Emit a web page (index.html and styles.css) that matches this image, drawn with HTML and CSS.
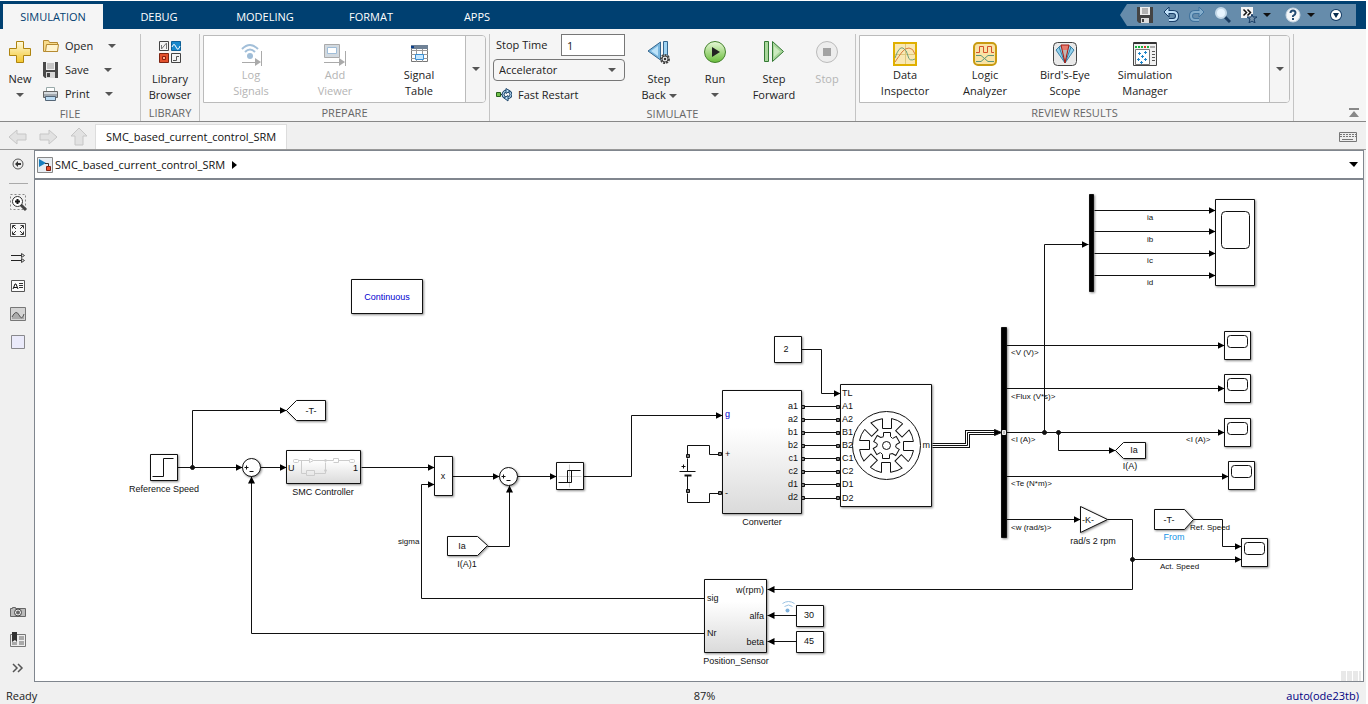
FILE: index.html
```
<!DOCTYPE html>
<html lang="en">

<head>
    <meta charset="UTF-8">
    <meta name="viewport" content="width=device-width, initial-scale=1.0">
    <title>SMC_based_current_control_SRM</title>
    <link rel="stylesheet" href="styles.css">
</head>

<body>
    <!-- tab strip -->
    <header class="tab-bar">
        <nav class="tabs">
            <button class="tab active">SIMULATION</button>
            <button class="tab">DEBUG</button>
            <button class="tab">MODELING</button>
            <button class="tab">FORMAT</button>
            <button class="tab">APPS</button>
        </nav>
        <div class="quick-access">
            <button aria-label="Save"><svg width="16" height="16"><path d="M0 0h16v16H2l-2-2z" fill="#444"/><path d="M3 0h10v8H3z" fill="#eee"/><path d="M5 2h6M5 4h6M5 6h6" stroke="#777"/><path d="M4 11h8v5H4z" fill="#ddd"/><path d="M5 12h2v3H5z" fill="#444"/></svg></button>
            <button aria-label="Undo"><svg width="16" height="16"><path d="M4 5h6q4 0 4 4t-4 4H6" fill="none" stroke="#173c66" stroke-width="4"/><path d="M6 0L1 5l5 5z" fill="#bfe0f8" stroke="#173c66"/><path d="M4 5h6q4 0 4 4t-4 4H6" fill="none" stroke="#bfe0f8" stroke-width="2"/></svg></button>
            <button aria-label="Redo"><svg width="16" height="16"><path d="M12 5H6q-4 0-4 4t4 4h4" fill="none" stroke="#3f729d" stroke-width="4"/><path d="M10 0l5 5-5 5z" fill="#84adcb" stroke="#3f729d"/><path d="M12 5H6q-4 0-4 4t4 4h4" fill="none" stroke="#84adcb" stroke-width="2"/></svg></button>
            <button aria-label="Find"><svg width="16" height="16"><path d="M9 9l6 6" stroke="#1c3e63" stroke-width="3"/><circle cx="6" cy="6" r="5" fill="#e8f5ff" stroke="#c5d9e8" stroke-width="2"/></svg></button>
            <button class="with-arrow" aria-label="Shortcuts"><svg width="16" height="16"><path d="M0 0h12v11H0z" fill="#f5f5f5"/><path d="M2.5 2.500l3 3-3 3M6.500 2.500l3 3-3 3" fill="none" stroke="#111" stroke-width="1.500"/><path d="M11 7l1 3h4l-3 2 1 4-3-2-3 2 1-4-3-2h4z" fill="#7793ab" stroke="#173c66"/></svg><span class="arrow dark"></span></button>
            <button class="with-arrow" aria-label="Help"><svg width="16" height="16"><circle cx="8" cy="8" r="7" fill="#f4f6f8" stroke="#c7d6e2"/><path d="M5.500 6q0-2.500 2.500-2.500t2.500 2.500q0 1.500-2.500 3v1M8 11v2" fill="none" stroke="#234b73" stroke-width="2"/></svg><span class="arrow dark"></span></button>
            <button aria-label="More"><svg width="14" height="14"><circle cx="7" cy="7" r="6" fill="#163d66"/><circle cx="7" cy="7" r="5" fill="#fff"/><path d="M4 5h6l-3 5z" fill="#0a2d50"/></svg></button>
        </div>
    </header>

    <!-- toolstrip -->
    <div class="toolstrip">
        <section class="group">
            <div class="group-body">
                <button class="big-button new-button">
                    <svg width="24" height="24"><defs><linearGradient id="gold" x2="0" y2="1"><stop offset="0" stop-color="#fffbe0"/><stop offset="1" stop-color="#f3c62c"/></linearGradient></defs><path d="M8.500 1.500h7v7h7v7h-7v7h-7v-7h-7v-7h7z" fill="url(#gold)" stroke="#ae8410"/></svg>
                    <span>New</span><span class="arrow"></span>
                </button>
                <div class="file-list">
                    <button><svg width="18" height="16"><path d="M1.500 13.500v-11h5l1 2h8v9z" fill="#f8dc8c" stroke="#b58a31"/><path d="M3.500 13.500l1-7h12l-1 7z" fill="#fff4cf" stroke="#b58a31"/></svg>Open<span class="arrow"></span></button>
                    <button><svg width="18" height="16"><path d="M1 0h15v16H3l-2-2z" fill="#494949"/><path d="M4 0h9v8H4z" fill="#f2f2f2"/><path d="M5 2h7M5 4h7M5 6h7" stroke="#999"/><path d="M4 10h9v6H4z" fill="#d7d7d7"/><path d="M5 11h3v4H5z" fill="#444"/></svg>Save<span class="arrow"></span></button>
                    <button><svg width="18" height="16"><path d="M4.500 1.500h8v5h-8z" fill="#fff" stroke="#9aa"/><path d="M1.500 5.500h14v6h-14z" fill="#a3a9af" stroke="#666"/><path d="M2 6h13v2H2z" fill="#d5dade"/><path d="M3.500 10.500h10v4h-10z" fill="#bcdcf4" stroke="#567"/></svg>Print<span class="arrow"></span></button>
                </div>
            </div>
            <div class="group-name">FILE</div>
        </section>

        <section class="group">
            <div class="group-body">
                <button class="big-button library-button">
                    <svg width="24" height="24"><g stroke="#444"><path d="M1.500 1.500h9v9h-9z" fill="#f3f3f3"/><path d="M13.500 1.500h9v9h-9z" fill="#1688cc" stroke="#0d5f96"/><path d="M1.500 13.500h9v9h-9z" fill="#e2512d" stroke="#7d2412"/><path d="M13.500 13.500h9v9h-9z" fill="#f3f3f3"/></g><path d="M3.500 9V5M3.500 9l5-6M8.500 3v6" stroke="#777" fill="none"/><path d="M14 7q2-5 4 0t4-1" stroke="#fff" fill="none"/><path d="M4.500 16.500h3v3h-3z" fill="#ffb08f" stroke="#8d1c0d"/><path d="M15 20.500h3.500v-4H21" stroke="#555" fill="none"/></svg>
                    <span>Library<br>Browser</span>
                </button>
            </div>
            <div class="group-name">LIBRARY</div>
        </section>

        <section class="group">
            <div class="group-body">
                <div class="gallery prepare">
                    <button disabled><svg width="24" height="24"><path d="M3 7q8-8 16 0M6 10q5-5 10 0" fill="none" stroke="#a2bfd9" stroke-width="2"/><circle cx="11" cy="14" r="3" fill="#a0bdd7"/><path d="M3 20.500h14" stroke="#aaa"/><path d="M16 16l6 4-6 4zM22 9h1v15h-1z" fill="#aaa"/></svg>Log<br>Signals</button>
                    <button disabled><svg width="24" height="24"><path d="M1.500 2.500h15v13h-15z" fill="#d2d9df" stroke="#aaa"/><path d="M4.500 5.500h9v6h-9z" fill="#fff" stroke="#9fbdd8"/><path d="M1 20.500h15" stroke="#aaa"/><path d="M16 16l6 4-6 4zM22 9h1v15h-1z" fill="#aaa"/></svg>Add<br>Viewer</button>
                    <button><svg width="24" height="24"><path d="M4.500 3.500h16v16h-16z" fill="#fff" stroke="#777"/><path d="M4 3h17v4H4z" fill="#6f8296"/><path d="M4 4h3v2H4z" fill="#0d3f8a"/><path d="M4 8.500h17M4 12.500h17M4 16.500h17M9.500 7v13M15.500 7v13" stroke="#999"/><path d="M8.500 12.500h8v5h-8z" fill="#c6e8ff" stroke="#3b8fd4"/></svg>Signal<br>Table</button>
                    <button class="gallery-more" aria-label="More prepare tools"><span class="arrow"></span></button>
                </div>
            </div>
            <div class="group-name">PREPARE</div>
        </section>

        <section class="group">
            <div class="group-body">
                <div class="sim-options">
                    <div class="stop-time"><label for="stop-time">Stop Time</label><input type="text" id="stop-time" value="1"></div>
                    <div class="mode"><select aria-label="Simulation mode"><option>Accelerator</option><option>Normal</option></select><span class="arrow"></span></div>
                    <button class="fast-restart"><svg width="16" height="14"><path d="M.500 4.500h4v4h-4z" fill="#6fc04a" stroke="#28601c"/><path d="M5 6.500h2" stroke="#222"/><ellipse cx="11" cy="6.500" rx="4" ry="3.500" fill="none" stroke="#234a6e" stroke-width="3"/><ellipse cx="11" cy="6.500" rx="4" ry="3.500" fill="none" stroke="#b9dcf5"/><path d="M10 .500l4 2.500-4 2.500zM12 7.500L8 10l4 3z" fill="#b9dcf5" stroke="#234a6e"/></svg>Fast Restart</button>
                </div>
                <button class="big-button step-back">
                    <svg width="24" height="24"><path d="M13.500 2v18L1 11z" fill="#79b7df" stroke="#35668e"/><path d="M11 6v10l-7-5z" fill="#bde3f9"/><path d="M16.500 1.500h4v18h-4z" fill="#9fd3f2" stroke="#35668e"/><circle cx="18" cy="19" r="4" fill="#eee" stroke="#444" stroke-width="2" stroke-dasharray="2 1"/><circle cx="18" cy="19" r="3" fill="#ddd" stroke="#444"/><circle cx="18" cy="19" r="1"/></svg>
                    <span>Step<br>Back <i class="arrow"></i></span>
                </button>
                <button class="big-button run">
                    <svg width="24" height="24"><defs><linearGradient id="green" x2="0" y2="1"><stop offset="0" stop-color="#e8f8d8"/><stop offset="1" stop-color="#69bd3b"/></linearGradient></defs><circle cx="12" cy="12" r="10.500" fill="url(#green)" stroke="#45822e"/><path d="M9 7l8 5-8 5z" fill="#222"/></svg>
                    <span>Run</span><span class="arrow"></span>
                </button>
                <button class="big-button step-forward">
                    <svg width="24" height="24"><path d="M2.500 1.500h4v20h-4zM10.500 1.500l11 10-11 10z" fill="#a9d69b" stroke="#347a34"/><path d="M12 6v11l6-5.500z" fill="#cdebc0"/></svg>
                    <span>Step<br>Forward</span>
                </button>
                <button class="big-button stop" disabled>
                    <svg width="24" height="24"><circle cx="12" cy="12" r="10.500" fill="#ededed" stroke="#bbb"/><path d="M8 8h8v8H8z" fill="#a2a2a2"/></svg>
                    <span>Stop</span>
                </button>
            </div>
            <div class="group-name">SIMULATE</div>
        </section>

        <section class="group">
            <div class="group-body">
                <div class="gallery review">
                    <button><svg width="24" height="24"><path d="M1 1h22v22H1z" fill="#f9e8b4" stroke="#e0b000" stroke-width="2"/><path d="M12.500 2v20M2 12.500h20" stroke="#ddc87d"/><path d="M2 20Q6 14 9 10t7-4 6 6" fill="none" stroke="#d77d3c"/><path d="M2 16Q6 4 10 6t5 8 7 3" fill="none" stroke="#719f7c"/></svg>Data<br>Inspector</button>
                    <button><svg width="24" height="24"><rect x="1" y="1" width="22" height="22" rx="4" fill="#f9e3a5" stroke="#c99b10" stroke-width="2"/><path d="M3 10.500h3.500v-6h4v6h4v-6h4v6H21" fill="none" stroke="#d5522b"/><path d="M3 13.500h5l7 6h6M3 19.500h5l7-6h6" fill="none" stroke="#5c967a"/></svg>Logic<br>Analyzer</button>
                    <button><svg width="24" height="24"><rect x=".500" y=".500" width="23" height="23" rx="4" fill="#e9e9e9" stroke="#444"/><path d="M12 21L3 8l4-4h10l4 4z" fill="#91d0ed" stroke="#3f83a7"/><path d="M12 21L6 5M12 21l6-16" stroke="#367fa2"/><path d="M12 21L8 3h8z" fill="#e67b6e" stroke="#a51d15"/><path d="M12 17l-2-9h4z" fill="#b9b9b9"/></svg>Bird's-Eye<br>Scope</button>
                    <button><svg width="24" height="24"><path d="M.500.500h23v23H.500z" fill="#f1f1f1" stroke="#444"/><path d="M1 0h22v2H1z" fill="#333"/><path d="M2 5h8M14 5h2" stroke="#16b43b" stroke-width="2" stroke-dasharray="2 1"/><path d="M11 5h2" stroke="#d63822" stroke-width="2"/><path d="M17 5h5" stroke="#aaa" stroke-width="2"/><path d="M2.500 7.500h14v15h-14z" fill="#fff" stroke="#777"/><path d="M5 11.500h3M6.500 10v3M11 10.500h3M12.500 9v3M8 14.500h3M9.500 13v3M4 17.500h3M5.500 16v3M11 17.500h3M12.500 16v3M7 20.500h3M8.500 19v3" stroke="#1e84c9"/><path d="M19 9.500h3M19 12.500h3M19 15.500h3M19 18.500h3" stroke="#555"/></svg>Simulation<br>Manager</button>
                    <button class="gallery-more" aria-label="More review tools"><span class="arrow"></span></button>
                </div>
            </div>
            <div class="group-name">REVIEW RESULTS</div>
        </section>
        <button class="collapse" aria-label="Collapse toolstrip"><svg width="12" height="10"><path d="M1 0h10v2H1zM6 3l5 6H1z" fill="#888"/></svg></button>
    </div>

    <!-- open models -->
    <div class="document-bar">
        <button aria-label="Back"><svg width="20" height="18"><path d="M1 9l8-7v4h9v6H9v4z" fill="#e2e2e2" stroke="#c6c6c6"/></svg></button>
        <button aria-label="Forward"><svg width="20" height="18"><path d="M19 9l-8-7v4H2v6h9v4z" fill="#e2e2e2" stroke="#c6c6c6"/></svg></button>
        <button aria-label="Up"><svg width="20" height="18"><path d="M11 0l8 8h-4v9H7V8H3z" fill="#e2e2e2" stroke="#c6c6c6"/></svg></button>
        <button class="document-tab">SMC_based_current_control_SRM</button>
        <button class="keyboard" aria-label="Keyboard"><svg width="18" height="10"><path d="M.500.500h17v9H.500z" fill="#eee" stroke="#777"/><path d="M1 2.500h16M1 4.500h16" stroke="#777" stroke-dasharray="2 1"/><path d="M3 7.500h11" stroke="#777"/></svg></button>
    </div>

    <main class="editor">
        <aside class="palette">
            <button aria-label="Hide browser"><svg width="20" height="20"><circle cx="10" cy="10" r="5" fill="#eee" stroke="#555"/><path d="M7 10l3-3v2h3v2h-3v2z" fill="#333"/></svg></button>
            <hr>
            <button aria-label="Zoom"><svg width="20" height="20"><path d="M2.500 2.500h15v15h-15z" fill="none" stroke="#888" stroke-dasharray="2 2"/><path d="M13 13l5 5" stroke="#444" stroke-width="3"/><circle cx="9.500" cy="9.500" r="5" fill="#fff" stroke="#333"/><path d="M7 9.500h5M9.500 7v5" stroke="#111" stroke-width="2"/></svg></button>
            <button aria-label="Fit to view"><svg width="20" height="20"><path d="M2.500 3.500h15v13h-15z" fill="#f8f8f8" stroke="#555"/><path d="M4.500 8.500v-3h3M5 6l3 3M12.500 5.500h3v3M15 6l-3 3M4.500 11.500v3h3M5 14l3-3M15.500 11.500v3h-3M15 14l-3-3" fill="none" stroke="#333"/></svg></button>
            <button aria-label="Sample time"><svg width="20" height="20"><path d="M3 7.500h10M3 12.500h10" stroke="#222"/><path d="M13.500 5.500l3 2-3 2zM13.500 10.500l3 2-3 2z" fill="#ddd" stroke="#444"/></svg></button>
            <button aria-label="Annotation"><svg width="20" height="20"><path d="M3.500 4.500h13v11h-13z" fill="#fbfbfb" stroke="#555"/><path d="M5 13l2-5h1l2 5M6 11.500h3" fill="none" stroke="#111"/><path d="M11 7.500h4M11 9.500h4M11 11.500h4" stroke="#333"/></svg></button>
            <button aria-label="Image"><svg width="20" height="20"><path d="M2.500 3.500h15v13h-15z" fill="#d4d4d4" stroke="#777"/><path d="M4 13q4-8 7-2t5-1v5H4z" fill="#aaa"/><path d="M4 13q4-8 7-2t5-1" fill="none" stroke="#555"/></svg></button>
            <button aria-label="Area"><svg width="20" height="20"><path d="M3.500 3.500h13v13h-13z" fill="#eaeafa" stroke="#88888c"/></svg></button>
            <span class="spacer"></span>
            <button aria-label="Screenshot"><svg width="20" height="20"><path d="M2.500 6.500h2v-1h3v1h10v8h-15z" fill="#bbb" stroke="#666"/><circle cx="10" cy="10.500" r="3.500" fill="#eee" stroke="#444"/><circle cx="10" cy="10.500" r="2" fill="#666"/></svg></button>
            <button aria-label="Model browser"><svg width="20" height="20"><path d="M2.500 4.500h15v12h-15z" fill="#eee" stroke="#777"/><path d="M11 6h5v4h-5zM11 11h5v4h-5zM4 12h5v3H4z" fill="#aaa"/><path d="M4 2h5v10l-2-2-3 2z" fill="#333"/></svg></button>
            <button aria-label="Expand"><svg width="20" height="20"><path d="M5 6l4 4-4 4M10 6l4 4-4 4" fill="none" stroke="#555" stroke-width="1.500"/></svg></button>
        </aside>

        <div class="workspace">
            <div class="breadcrumb">
                <svg width="16" height="16"><path d="M.500.500h15v15H.500z" fill="#e8edf2" stroke="#888"/><path d="M2 2l7 4-7 4z" fill="#167ebd"/><path d="M8 6.500h3.500V9" fill="none" stroke="#333"/><path d="M9.500 9.500h4v4h-4z" fill="#e5512f" stroke="#7f2110"/></svg>
                <a href="#">SMC_based_current_control_SRM</a>
                <svg width="8" height="8"><path d="M1 0l5 4-5 4z"/></svg>
                <button aria-label="History"><svg width="10" height="6"><path d="M0 0h9L5 5z"/></svg></button>
            </div>

            <div class="canvas">
                <svg class="diagram" role="img" aria-label="SMC based current control model">
                    <defs>
                        <marker id="head" markerWidth="8" markerHeight="8" refX="7" refY="4" orient="auto" markerUnits="userSpaceOnUse"><path d="M0 .500l7 3.500-7 3.500z"/></marker>
                        <linearGradient id="shade" x2="0" y2="1"><stop offset="0.3" stop-color="#fff"/><stop offset="1" stop-color="#dadada"/></linearGradient>
                        <path id="scope" d="M0 0h26v28H0zM6 4h14q3 0 3 3v6q0 3-3 3H6q-3 0-3-3V7q0-3 3-3z"/>
                        <path id="port" d="M-1-1h3v3h-3z"/>
                        <path id="pole" d="M-4-27v10h9v-10A27 27 0 0 1 16-22"/>
                        <path id="tooth" d="M-3-9v-4h7v4L6-7"/>
                    </defs>

                    <!-- blocks -->
                    <g class="blocks" transform="translate(-34.5 -179.5)">
                        <path d="M351 279h71v34h-71z"/>
                        <path d="M150 454h27v26h-27z"/>
                        <path d="M286 410l10-10h29v20h-29z"/>
                        <circle cx="251" cy="467" r="9"/>
                        <path class="shaded" d="M286 450h74v33h-74z"/>
                        <path d="M434 456h18v39h-18z"/>
                        <circle cx="508" cy="476" r="9"/>
                        <path d="M447 536h30l10 9-10 10h-30z"/>
                        <path d="M556 462h27v27h-27z"/>
                        <path class="shaded" d="M722 390h79v123h-79z"/>
                        <path d="M774 336h27v26h-27z"/>
                        <path d="M840 384h91v122h-91z"/>
                        <path class="shaded" d="M704 579h62v73h-62z"/>
                        <path d="M796 605h27v21h-27z"/>
                        <path d="M796 631h27v21h-27z"/>
                        <path d="M1215 199h39v86h-39z"/>
                        <rect x="1221" y="211" width="28" height="37" rx="4"/>
                        <use href="#scope" x="1224" y="331"/>
                        <use href="#scope" x="1224" y="374"/>
                        <use href="#scope" x="1224" y="418"/>
                        <use href="#scope" x="1228" y="461"/>
                        <use href="#scope" x="1241" y="538"/>
                        <path d="M1115 450l8-8h22v16h-22z"/>
                        <path d="M1080 506l27 13-27 13z"/>
                        <path d="M1154 509h30l9 10-9 10h-30z"/>
                        <path class="solid" d="M1001 327h5v210h-5zM1089 194h4v97h-4z"/>
                    </g>

                    <!-- signal lines -->
                    <g class="wires" transform="translate(-34.5 -179.5)">
                        <g class="arrows">
                            <path d="M177 467H242"/>
                            <path d="M192 467V410H286"/>
                            <path d="M260 467H286"/>
                            <path d="M361 467H434"/>
                            <path d="M704 598H421V484H434"/>
                            <path d="M452 476H499"/>
                            <path d="M517 476H556"/>
                            <path d="M487 546H509V485"/>
                            <path d="M583 476H631V415H722"/>
                            <path d="M704 633H251V476"/>
                            <path d="M801 349H821V393H840"/>
                            <path d="M1006 345H1224"/>
                            <path d="M1006 388H1224"/>
                            <path d="M1006 432H1224"/>
                            <path d="M1006 476H1228"/>
                            <path d="M1006 519H1080"/>
                            <path d="M1044 432V244H1088"/>
                            <path d="M1058 432V450H1115"/>
                            <path d="M1094 210H1215"/>
                            <path d="M1094 231H1215"/>
                            <path d="M1094 253H1215"/>
                            <path d="M1094 275H1215"/>
                            <path d="M1107 519H1132V589H767"/>
                            <path d="M1132 559H1241"/>
                            <path d="M1193 519H1222V546H1241"/>
                            <path d="M796 615H767"/>
                            <path d="M796 641H767"/>
                        </g>
                        <path d="M803 406H838M803 419H838M803 432H838M803 445H838M803 458H838M803 471H838M803 484H838M803 498H838"/>
                        <path d="M687 454V445H709V454H720M687 493V502H709V493H720M687 458V471M687 475V489M679 471H695M681 466H685M683 464V468"/>
                        <path class="thick" d="M684 475H691"/>
                        <path class="bus-outer" d="M932 445H967V432H995"/>
                        <path class="bus-inner" d="M932 445H967V432H995"/>
                        <path d="M932 445H967V432H995"/>
                        <path class="solid" d="M994 429l7 3-7 3z"/>
                        <path class="mark" d="M1002 430h3v4h-3z"/>
                        <g class="dots"><circle cx="192" cy="467" r="2"/><circle cx="1044" cy="432" r="2"/><circle cx="1058" cy="432" r="2"/><circle cx="1132" cy="559" r="2"/></g>
                        <g class="ports">
                            <use href="#port" x="802" y="406"/><use href="#port" x="802" y="419"/><use href="#port" x="802" y="432"/><use href="#port" x="802" y="445"/><use href="#port" x="802" y="458"/><use href="#port" x="802" y="471"/><use href="#port" x="802" y="484"/><use href="#port" x="802" y="497"/>
                            <use href="#port" x="837" y="406"/><use href="#port" x="837" y="419"/><use href="#port" x="837" y="432"/><use href="#port" x="837" y="445"/><use href="#port" x="837" y="458"/><use href="#port" x="837" y="471"/><use href="#port" x="837" y="484"/><use href="#port" x="837" y="497"/>
                            <use href="#port" x="687" y="455"/><use href="#port" x="687" y="490"/><use href="#port" x="719" y="453"/><use href="#port" x="719" y="492"/>
                        </g>
                    </g>

                    <!-- block icons -->
                    <g class="glyphs" transform="translate(-34.5 -179.5)">
                        <path d="M152 476H163V458H173"/>
                        <path d="M244 467H248M246 465V469M249 471H253M501 476H505M503 474V478M506 480H510"/>
                        <path class="faint" d="M558 476H581M569 464V487"/>
                        <path d="M558 482H571V470M580 470H567V482"/>
                        <g class="faint">
                            <rect x="293" y="459" width="5" height="3" rx="1"/><rect x="349" y="459" width="5" height="3" rx="1"/>
                            <path d="M298 460H309V458L313 460L309 462V460M313 460H333V458H338V462H333M338 460H349M301 460V473H306V470H314V475H306V473M314 473H325V462"/>
                            <circle cx="325" cy="460" r="1"/><circle cx="325" cy="470" r="1"/>
                        </g>
                        <g transform="translate(886 445)">
                            <circle r="34"/>
                            <use href="#pole"/><use href="#pole" transform="rotate(45)"/><use href="#pole" transform="rotate(90)"/><use href="#pole" transform="rotate(135)"/><use href="#pole" transform="rotate(180)"/><use href="#pole" transform="rotate(225)"/><use href="#pole" transform="rotate(270)"/><use href="#pole" transform="rotate(315)"/>
                            <use href="#tooth"/><use href="#tooth" transform="rotate(60)"/><use href="#tooth" transform="rotate(120)"/><use href="#tooth" transform="rotate(180)"/><use href="#tooth" transform="rotate(240)"/><use href="#tooth" transform="rotate(300)"/>
                            <circle r="4"/>
                        </g>
                        <path class="signal" d="M782 603q6-4 12 0M784 606q4-3 8 0"/><circle class="signal-dot" cx="787" cy="610" r="2"/>
                    </g>

                    <!-- labels -->
                    <g class="labels" transform="translate(-35 -180)">
                        <text class="blue mid" x="387" y="300">Continuous</text>
                        <text class="mid" x="164" y="492">Reference Speed</text>
                        <text class="mid" x="311" y="414">-T-</text>
                        <text x="288" y="471">U</text>
                        <text class="end" x="358" y="471">1</text>
                        <text class="mid" x="323" y="495">SMC Controller</text>
                        <text class="mid" x="443" y="479">x</text>
                        <text class="mid" x="462" y="549">Ia</text>
                        <text class="mid" x="467" y="567">I(A)1</text>
                        <text class="mid" x="786" y="352">2</text>
                        <text class="blue" x="725" y="417">g</text>
                        <text x="725" y="457">+</text>
                        <text x="725" y="496">-</text>
                        <text class="end" x="798" y="409">a1</text>
                        <text class="end" x="798" y="422">a2</text>
                        <text class="end" x="798" y="435">b1</text>
                        <text class="end" x="798" y="448">b2</text>
                        <text class="end" x="798" y="461">c1</text>
                        <text class="end" x="798" y="474">c2</text>
                        <text class="end" x="798" y="487">d1</text>
                        <text class="end" x="798" y="500">d2</text>
                        <text x="842" y="396">TL</text>
                        <text x="842" y="409">A1</text>
                        <text x="842" y="422">A2</text>
                        <text x="842" y="435">B1</text>
                        <text x="842" y="448">B2</text>
                        <text x="842" y="461">C1</text>
                        <text x="842" y="474">C2</text>
                        <text x="842" y="487">D1</text>
                        <text x="842" y="501">D2</text>
                        <text class="end" x="930" y="448">m</text>
                        <text class="mid" x="762" y="525">Converter</text>
                        <text x="707" y="601">sig</text>
                        <text x="707" y="636">Nr</text>
                        <text class="end" x="764" y="593">w(rpm)</text>
                        <text class="end" x="764" y="619">alfa</text>
                        <text class="end" x="764" y="645">beta</text>
                        <text class="mid" x="736" y="664">Position_Sensor</text>
                        <text class="mid" x="809" y="618">30</text>
                        <text class="mid" x="809" y="644">45</text>
                        <text class="mid" x="1134" y="453">Ia</text>
                        <text class="mid" x="1130" y="469">I(A)</text>
                        <text class="mid" x="1088" y="523">-K-</text>
                        <text class="mid" x="1093" y="544">rad/s 2 rpm</text>
                        <text class="mid" x="1169" y="523">-T-</text>
                        <text class="mid from" x="1174" y="540">From</text>
                        <g class="small">
                            <text x="398" y="544">sigma</text>
                            <text class="mid" x="1150" y="220">ia</text>
                            <text class="mid" x="1150" y="242">ib</text>
                            <text class="mid" x="1150" y="263">ic</text>
                            <text class="mid" x="1150" y="285">id</text>
                            <text x="1011" y="355">&lt;V (V)&gt;</text>
                            <text x="1011" y="399">&lt;Flux (V*s)&gt;</text>
                            <text x="1011" y="442">&lt;I (A)&gt;</text>
                            <text x="1186" y="442">&lt;I (A)&gt;</text>
                            <text x="1011" y="486">&lt;Te (N*m)&gt;</text>
                            <text x="1011" y="530">&lt;w (rad/s)&gt;</text>
                            <text x="1190" y="530">Ref. Speed</text>
                            <text x="1160" y="569">Act. Speed</text>
                        </g>
                    </g>
                </svg>
                <div class="grip"></div>
            </div>
        </div>
    </main>

    <footer class="status-bar">
        <span>Ready</span>
        <span class="zoom-level">87%</span>
        <a href="#">auto(ode23tb)</a>
    </footer>
</body>

</html>
```

FILE: styles.css
```
* {
    box-sizing: border-box;
}

body {
    display: flex;
    flex-direction: column;
    height: 100vh;
    margin: 0;
    padding: 1px 2px 0 0;
    background-color: #fff;
    color: #222;
    font-family: "Open Sans", "Noto Sans", sans-serif;
    font-size: 11px;
    line-height: 16px;
}

button {
    padding: 0;
    border: none;
    background: none;
    color: inherit;
    font: inherit;
    white-space: nowrap;
}

button:disabled {
    color: #b4b4b4;
}

svg {
    display: block;
    flex: none;
}

.arrow {
    display: inline-block;
    flex: none;
    border: 4px solid transparent;
    border-top-color: #555;
    border-bottom: none;
    vertical-align: middle;
}

.arrow.dark {
    border-top-color: #111;
}

/* tab strip */
.tab-bar {
    display: flex;
    justify-content: space-between;
    padding: 3px 10px 0 3px;
    background-color: #004071;
}

.tabs {
    display: flex;
    gap: 6px;
}

.tab {
    width: 100px;
    height: 25px;
    color: #fff;
}

.tab.active {
    background-color: #f5f5f5;
    color: #004071;
}

.quick-access {
    display: flex;
    align-items: center;
    gap: 10px;
    height: 22px;
    padding: 0 13px 0 17px;
    background-color: #668cab;
    clip-path: polygon(0 50%, 7px 0, 100% 0, 100% 100%, 7px 100%);
}

.quick-access .with-arrow {
    display: flex;
    align-items: center;
    gap: 6px;
    margin-right: 4px;
}

/* toolstrip */
.toolstrip {
    display: flex;
    height: 93px;
    padding-top: 5px;
    border-bottom: 1px solid #888;
    background-color: #f5f5f5;
}

.group {
    display: flex;
    flex-direction: column;
    justify-content: space-between;
    padding: 0 3px;
    border-right: 1px solid #c4c4c4;
}

.group-body {
    display: flex;
}

.group-name {
    color: #666;
    text-align: center;
}

.big-button {
    display: flex;
    flex-direction: column;
    align-items: center;
    justify-content: flex-start;
    height: 70px;
    padding-top: 6px;
}

.big-button svg {
    margin-bottom: 7px;
}

.big-button > .arrow {
    margin-top: 6px;
}

.new-button {
    width: 34px;
}

.library-button {
    width: 52px;
}

.step-back {
    width: 62px;
    margin-left: 3px;
}

.run {
    width: 50px;
}

.step-forward {
    width: 68px;
}

.stop {
    width: 38px;
    margin-right: 6px;
}

.file-list {
    display: flex;
    flex-direction: column;
    width: 100px;
    padding-left: 5px;
}

.file-list button {
    display: flex;
    align-items: center;
    height: 24px;
}

.file-list svg {
    margin-right: 5px;
}

.file-list .arrow {
    margin-left: 15px;
}

.gallery {
    display: flex;
    height: 68px;
    margin-top: 1px;
    padding-left: 5px;
    overflow: hidden;
    border: 1px solid #bbb;
    border-radius: 0 4px 4px 0;
    background-color: #fff;
}

.gallery button {
    display: flex;
    flex-direction: column;
    align-items: center;
    width: 80px;
    padding-top: 6px;
    text-align: center;
}

.gallery svg {
    margin-bottom: 1px;
}

.gallery.prepare button {
    width: 84px;
}

.gallery .gallery-more,
.gallery.prepare .gallery-more {
    justify-content: center;
    width: 20px;
    margin-left: auto;
    padding: 0;
    border-left: 1px solid #bbb;
    background-color: #f5f5f5;
}

.gallery.prepare {
    width: 283px;
}

.gallery.review {
    width: 431px;
}

.sim-options {
    display: flex;
    flex-direction: column;
    gap: 3px;
    width: 132px;
}

.stop-time {
    display: flex;
    align-items: center;
    justify-content: space-between;
    padding-left: 3px;
}

.stop-time input {
    width: 64px;
    height: 22px;
    padding: 0 5px;
    border: 1px solid #777;
    background-color: #fff;
    color: #222;
    font: inherit;
}

.mode {
    position: relative;
}

.mode select {
    width: 100%;
    height: 22px;
    padding: 0 5px;
    border: 1px solid #777;
    border-radius: 4px;
    appearance: none;
    background-color: #f5f5f5;
    color: #222;
    font: inherit;
}

.mode .arrow {
    position: absolute;
    top: 9px;
    right: 9px;
    pointer-events: none;
}

.fast-restart {
    display: flex;
    align-items: center;
    gap: 6px;
    height: 22px;
    padding-left: 3px;
}

.collapse {
    align-self: flex-end;
    margin: 0 6px 3px auto;
}

/* open models */
.document-bar {
    display: flex;
    align-items: center;
    gap: 10px;
    height: 28px;
    padding: 2px 9px 0 8px;
    border-bottom: 1px solid #999;
    background-color: #f0f0f0;
}

.document-tab {
    align-self: stretch;
    margin-left: -3px;
    padding: 0 10px;
    border: 1px solid #ddd;
    border-bottom: none;
    background-color: #fff;
    color: #111;
}

.keyboard {
    margin-left: auto;
}

/* editor */
.editor {
    display: flex;
    flex: 1;
    min-height: 0;
    padding-right: 2px;
    background-color: #f0f0f0;
}

.palette {
    display: flex;
    flex-direction: column;
    align-items: center;
    gap: 8px;
    width: 34px;
    padding: 4px 0;
}

.palette button {
    margin-left: 2px;
}

.palette hr {
    width: 19px;
    margin: 1px 0 0 2px;
    border: none;
    border-top: 1px solid #aaa;
}

.palette .spacer {
    flex: 1;
}

.workspace {
    display: flex;
    flex: 1;
    flex-direction: column;
    min-width: 0;
    border: 1px solid #80868e;
}

.breadcrumb {
    display: flex;
    align-items: center;
    height: 29px;
    padding: 0 4px 0 2px;
    border-bottom: 2px solid #80868e;
    background-color: #fff;
}

.breadcrumb a {
    margin: 0 6px 0 2px;
    color: #111;
    text-decoration: none;
}

.breadcrumb button {
    margin-left: auto;
}

.canvas {
    position: relative;
    flex: 1;
    min-height: 0;
    background-color: #fff;
}

.diagram {
    width: 100%;
    height: 100%;
}

.grip {
    position: absolute;
    right: 2px;
    bottom: 0;
    width: 20px;
    height: 10px;
    background: repeating-linear-gradient(90deg, #e8e8e8 0 5px, #fff 5px 6px);
}

.blocks {
    fill: #fff;
    stroke: #111;
    filter: drop-shadow(1px 1px 1px rgba(0, 0, 0, 0.45));
}

.blocks .shaded {
    fill: url(#shade);
}

.solid,
.blocks .solid {
    fill: #000;
}

.wires,
.glyphs {
    fill: none;
    stroke: #111;
}

.arrows path {
    marker-end: url(#head);
}

.dots {
    fill: #111;
}

.ports {
    fill: #777;
}

.wires .thick {
    stroke-width: 2px;
}

.bus-outer {
    stroke-width: 5px;
}

.bus-inner {
    stroke: #fff;
    stroke-width: 3px;
}

.mark {
    fill: #bbb;
    stroke: #eee;
}

.faint {
    stroke: #ccc;
}

.signal {
    stroke: #9cc3e3;
}

.signal-dot {
    fill: #7fb2dd;
    stroke: none;
}

.labels {
    fill: #111;
    font-family: "Liberation Sans", Arial, sans-serif;
    font-size: 9px;
}

.labels .small {
    font-size: 8px;
}

.labels .mid {
    text-anchor: middle;
}

.labels .end {
    text-anchor: end;
}

.labels .blue {
    fill: #0000d0;
}

.labels .from {
    fill: #1593e6;
}

/* status bar */
.status-bar {
    display: grid;
    grid-template-columns: 1fr auto 1fr;
    align-items: center;
    height: 22px;
    padding: 6px 7px 0 6px;
    background-color: #f0f0f0;
}

.zoom-level {
    margin-left: 44px;
}

.status-bar a {
    color: #000080;
    text-align: right;
    text-decoration: none;
}
```
